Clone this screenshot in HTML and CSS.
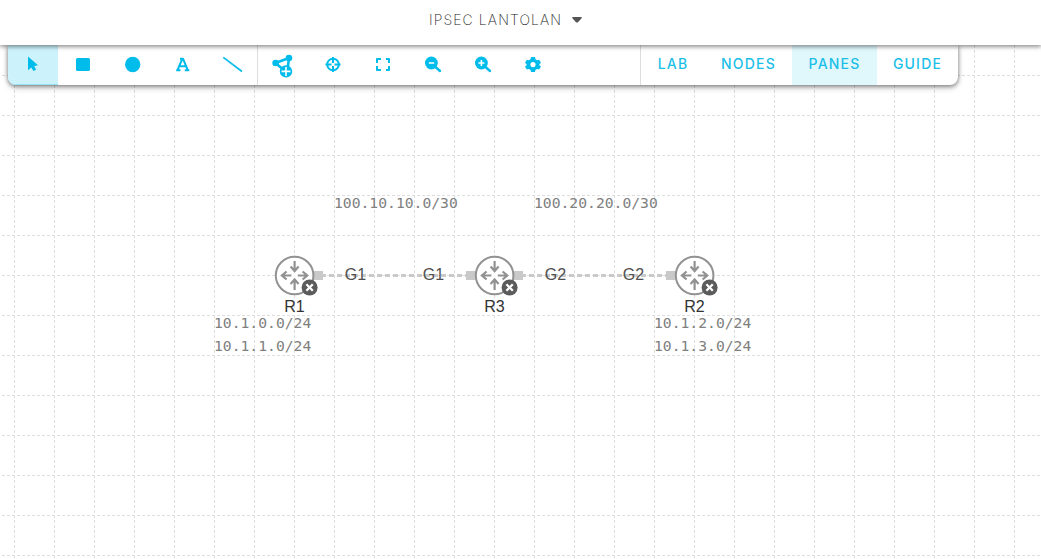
FILE: index.html
```html
<!DOCTYPE html>
<html lang="en">
<head>
<meta charset="utf-8">
<title>IPSEC LANTOLAN</title>
<link rel="stylesheet" href="styles.css">
</head>
<body>
<div class="app">
  <header class="header">
    <span class="title">IPSEC LANTOLAN</span>
    <svg class="caret" width="10" height="6" viewBox="0 0 10 6"><path d="M1 0H9Q10.4 .3 9.6 1.3L6 5.2Q5 6 4 5.2L.4 1.3Q-.4 .3 1 0Z"/></svg>
  </header>
  <nav class="toolbar">
    <div class="tools">
      <button class="tool selected"><svg viewBox="0 0 50 40"><path d="M20 11.5V25.2L23.2 22.5L25.5 26L28 24.8L26.3 21L30 20.3Z"/></svg></button>
      <button class="tool"><svg viewBox="0 0 50 40"><rect x="18" y="13" width="14" height="13" rx="1.6"/></svg></button>
      <button class="tool"><svg viewBox="0 0 50 40"><circle cx="24.7" cy="19.5" r="7.7"/></svg></button>
      <button class="tool"><svg viewBox="0 0 50 40"><path class="line" d="M19.6 25L24.2 13.8H25.1L29.7 25M21.3 21.2H28M18.2 25.2H22.5M26.8 25.2H31.3M22 13.8H25"/></svg></button>
      <button class="tool"><svg viewBox="0 0 50 40"><path class="thin" d="M15.3 12.3L34 26.5"/></svg></button>
    </div>
    <div class="tools actions">
      <button class="tool"><svg viewBox="0 0 50 40"><path class="line bold" d="M17.5 18L31 13L29.5 25M17.5 18L27 26"/><circle cx="17.6" cy="18" r="3.3"/><circle cx="31" cy="13" r="3.3"/><circle cx="28" cy="26.4" r="6.2"/><path class="white" d="M28 22V31M23.5 26.4H32.5"/></svg></button>
      <button class="tool"><svg viewBox="0 0 50 40"><circle class="line" cx="25" cy="19.5" r="5.8"/><path class="line" d="M25 12V18M25 21V27M17.5 19.5H23.5M26.5 19.5H32.5"/></svg></button>
      <button class="tool"><svg viewBox="0 0 50 40"><path class="line" d="M19 18V14H23M28 14H31V18M31 21V25H28M23 25H19V21"/></svg></button>
      <button class="tool"><svg viewBox="0 0 50 40"><circle cx="23.4" cy="18" r="6.4"/><path class="handle" d="M27.5 22L32 26"/><path class="white" d="M20.8 18H26.2"/></svg></button>
      <button class="tool"><svg viewBox="0 0 50 40"><circle cx="23.4" cy="18" r="6.4"/><path class="handle" d="M27.5 22L32 26"/><path class="white" d="M20.4 18H26.4M23.4 15V21"/></svg></button>
      <button class="tool"><svg viewBox="0 0 50 40"><path fill-rule="evenodd" d="M23 12H27L27.5 14.3L29.2 15.3L31.2 14.7L33 17.8L31.4 19.2V20.2L33 21.5L31.1 24.6L29.1 24L27.4 25L27 27H23L22.5 25L20.8 24L18.8 24.6L17 21.5L18.6 20.2V19.2L17 17.8L18.8 14.7L20.8 15.3L22.5 14.3ZM25 17A2.6 2.6 0 1 0 25 22.2A2.6 2.6 0 1 0 25 17Z"/></svg></button>
    </div>
    <div class="tabs">
      <button class="tab lab">LAB</button>
      <button class="tab nodes">NODES</button>
      <button class="tab panes active">PANES</button>
      <button class="tab guide">GUIDE</button>
    </div>
  </nav>
  <svg class="canvas" width="1041" height="559" viewBox="0 0 1041 559">
    <defs>
      <pattern id="grid" x="14" y="75" width="40" height="40" patternUnits="userSpaceOnUse">
        <path class="grid-line" d="M.5 0V40"/>
        <path class="grid-line across" d="M0 .5H40"/>
      </pattern>
      <g id="router">
        <circle class="ring" r="18.8"/>
        <path class="arrow" d="M0 -14.5V-5M-4 -9L0 -4.5L4 -9M0 14.5V4M-4 8.5L0 4L4 8.5M-3.2 0H-12.5M-8 -4L-12.7 0L-8 4M3.2 0H12.5M8 -4L12.7 0L8 4"/>
        <circle class="badge" cx="15" cy="12" r="8"/>
        <path class="cross" d="M11.8 8.8L18.2 15.2M18.2 8.8L11.8 15.2"/>
      </g>
    </defs>
    <rect x="2" width="1039" height="559" fill="url(#grid)"/>
    <g class="links"><path d="M321 275.5H466M521 275.5H666"/></g>
    <g class="ports"><path d="M314 271h9v9h-9zM466 271h9v9h-9zM514 271h9v9h-9zM666 271h9v9h-9z"/></g>
    <use href="#router" x="294.6" y="275.5"/>
    <use href="#router" x="494.6" y="275.5"/>
    <use href="#router" x="694.6" y="275.5"/>
    <g class="port-name">
      <text x="355.5" y="279.5">G1</text>
      <text x="433.5" y="279.5">G1</text>
      <text x="555.5" y="279.5">G2</text>
      <text x="633.5" y="279.5">G2</text>
    </g>
    <g class="node-name">
      <text x="294.5" y="312.4">R1</text>
      <text x="494.5" y="312.4">R3</text>
      <text x="694.5" y="312.4">R2</text>
    </g>
    <g class="note">
      <text x="334" y="208">100.10.10.0/30</text>
      <text x="534" y="208">100.20.20.0/30</text>
      <text x="214" y="328">10.1.0.0/24</text>
      <text x="214" y="351">10.1.1.0/24</text>
      <text x="654" y="328">10.1.2.0/24</text>
      <text x="654" y="351">10.1.3.0/24</text>
    </g>
  </svg>
</div>
</body>
</html>
```
FILE: styles.css
```css
body { margin: 0; background: #fff; }
.app {
  display: grid;
  grid-template: 45px 40px 1fr / 1fr;
  width: 1041px;
  height: 559px;
  overflow: hidden;
}
.header {
  grid-area: 1 / 1;
  z-index: 3;
  display: flex;
  box-sizing: border-box;
  padding: 11px 0 0 429px;
  background: #fff;
  box-shadow: 0 1px 5px rgba(0,0,0,.35), 0 2px 4px rgba(0,0,0,.2);
}
.title {
  width: 143px;
  font: 200 14px/18px Inter, sans-serif;
  letter-spacing: 1.1px;
  color: #222;
  white-space: nowrap;
}
.caret { margin-top: 6px; fill: #555; }
.toolbar {
  grid-area: 2 / 1;
  z-index: 2;
  display: flex;
  width: 950px;
  margin-left: 8px;
  background: #fff;
  border-radius: 0 0 8px 8px;
  overflow: hidden;
  box-shadow: 0 1px 4px rgba(0,0,0,.45), 0 3px 6px rgba(0,0,0,.2);
}
.tools { display: flex; width: 249px; }
.actions { width: 382px; border-left: 1px solid #ddd; }
.tool, .tab { margin: 0; padding: 0; border: 0; background: none; }
.tool { flex: 0 0 50px; height: 40px; }
.tool svg { display: block; width: 50px; height: 40px; fill: #00bceb; }
.selected { background: #ccf2fb; box-shadow: inset 0 -1px #91e1f5; border-radius: 0 0 0 6px; }
.tool .line { fill: none; stroke: #00bceb; stroke-width: 2; stroke-linejoin: round; }
.tool .bold { stroke-width: 2.6; }
.tool .thin { fill: none; stroke: #00bceb; stroke-width: 1.6; }
.tool .handle { fill: none; stroke: #00bceb; stroke-width: 2.4; stroke-linecap: round; }
.tool .white { fill: none; stroke: #fff; stroke-width: 1.6; }
.tabs { display: flex; border-left: 1px solid #ddd; }
.tab {
  padding-bottom: 2px;
  font: 500 14px/38px Inter, sans-serif;
  letter-spacing: 1.2px;
  color: #1abfe8;
}
.lab { width: 64px; }
.nodes { width: 87px; }
.panes { width: 85px; }
.guide { width: 81px; }
.active { background: #e0f7fc; }
.canvas { grid-area: 1 / 1 / 4 / 2; display: block; }
.grid-line { fill: none; stroke: #dedede; stroke-dasharray: 3 2; }
.across { stroke-dashoffset: 2; }
.links { fill: none; stroke: #cacaca; stroke-width: 3; stroke-dasharray: 5 3; }
.ports { fill: #c9c9c9; }
.ring { fill: #fff; stroke: #929292; stroke-width: 2; }
.arrow { fill: none; stroke: #929292; stroke-width: 2.2; }
.badge { fill: #5b5b5b; }
.cross { stroke: #fff; stroke-width: 2.3; }
.port-name, .node-name { font: 16px "Liberation Sans", sans-serif; text-anchor: middle; fill: #333; }
.port-name { fill: #505050; }
.note { font: 14.7px "DejaVu Sans Mono", monospace; fill: #808080; }
```
